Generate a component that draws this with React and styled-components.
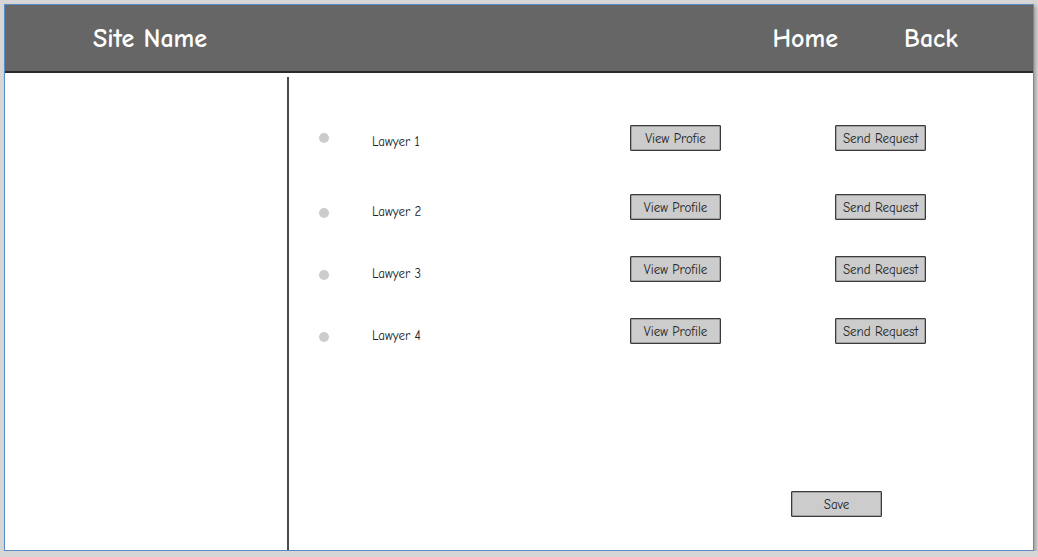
import React from "react";
import styled, { createGlobalStyle } from "styled-components";

const Global = createGlobalStyle`
  html, body { margin: 0; padding: 0; }
  body {
    background: #d6d6d6;
    font-family: "Comic Sans MS", "Comic Neue", "Open Sans", sans-serif;
    overflow: hidden;
  }
`;

const Frame = styled.div`
  box-sizing: border-box;
  width: 1030px;
  height: 547px;
  margin: 4px 0 0 4px;
  border: 1px solid #5b8cc4;
  background: #ffffff;
  box-shadow: 2px 2px 3px rgba(0, 0, 0, 0.25);
  display: flex;
  flex-direction: column;
  overflow: hidden;
`;

const Header = styled.header`
  height: 66px;
  flex: 0 0 auto;
  background: #666666;
  border-bottom: 2px solid #2a2a2a;
  display: flex;
  align-items: center;
  padding: 0 75px 0 88px;
  color: #ffffff;
  font-size: 26px;
  font-weight: 700;
`;

const SiteName = styled.div`
  flex: 1;
  padding-top: 1px;
`;

const Nav = styled.nav`
  display: flex;
  gap: 66px;
  padding-top: 1px;
`;

const NavLink = styled.span`
  color: #ffffff;
`;

const Main = styled.div`
  flex: 1;
  display: flex;
`;

const Sidebar = styled.aside`
  width: 282px;
  margin-top: 4px;
  border-right: 2px solid #4a4a4a;
`;

const Content = styled.section`
  flex: 1;
  display: flex;
  flex-direction: column;
`;

const Row = styled.div`
  display: flex;
  align-items: flex-start;
  height: 26px;
  margin-top: ${(p) => p.$top}px;
`;

const Dot = styled.span`
  width: 10px;
  height: 10px;
  border-radius: 50%;
  background: #cccccc;
  margin: ${(p) => p.$dy}px 0 0 30px;
  flex: 0 0 auto;
`;

const Label = styled.span`
  width: 258px;
  margin-left: 43px;
  margin-top: ${(p) => p.$dy}px;
  font-size: 13px;
  color: #222222;
  line-height: 16px;
`;

const Button = styled.button`
  box-sizing: border-box;
  width: 91px;
  height: 26px;
  background: #cccccc;
  border: 1px solid #3a3a3a;
  border-radius: 1px;
  box-shadow: inset 0 0 0 0.5px #777;
  font-family: inherit;
  font-size: 13px;
  color: #222222;
  padding: 0;
  margin-left: ${(p) => p.$ml || 0}px;
  margin-top: ${(p) => p.$dy || 0}px;
`;

const Footer = styled.div`
  margin-top: 147px;
  padding-left: 502px;
`;

const rows = [
  { name: "Lawyer 1", view: "View Profie", top: 52, dot: 8, label: 9 },
  { name: "Lawyer 2", view: "View Profile", top: 43, dot: 14, label: 10 },
  { name: "Lawyer 3", view: "View Profile", top: 36, dot: 14, label: 10 },
  { name: "Lawyer 4", view: "View Profile", top: 36, dot: 14, label: 10 },
];

export default function App() {
  return (
    <>
      <Global />
      <Frame>
        <Header>
          <SiteName>Site Name</SiteName>
          <Nav>
            <NavLink>Home</NavLink>
            <NavLink>Back</NavLink>
          </Nav>
        </Header>
        <Main>
          <Sidebar />
          <Content>
            {rows.map((r) => (
              <Row key={r.name} $top={r.top}>
                <Dot $dy={r.dot} />
                <Label $dy={r.label}>{r.name}</Label>
                <Button>{r.view}</Button>
                <Button $ml={114}>Send Request</Button>
              </Row>
            ))}
            <Footer>
              <Button>Save</Button>
            </Footer>
          </Content>
        </Main>
      </Frame>
    </>
  );
}
